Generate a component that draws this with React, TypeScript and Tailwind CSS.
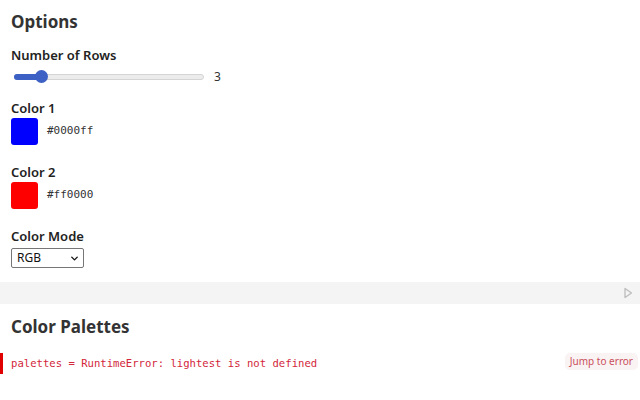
import { ChevronDown } from "lucide-react";

const sans = "font-['Noto_Sans','Open_Sans',sans-serif]";
const mono = "font-['DejaVu_Sans_Mono',monospace]";

const Swatch = ({ color, hex }: { color: string; hex: string }) => (
  <div className="flex items-center h-[27px]">
    <div className="w-[27px] h-[27px] rounded-[3px]" style={{ background: color }} />
    <span className={`${mono} text-[11px] text-[#333] ml-[9px]`}>{hex}</span>
  </div>
);

const App = () => {
  return (
    <div className={`${sans} bg-white w-[640px] h-[400px] overflow-hidden text-[#222]`}>
      <div className="px-[11px]">
        <h2 className="mt-[10px] h-[24px] text-[17px] leading-[24px] font-bold text-[#333]">Options</h2>

        <div className="mt-[12px] h-[18px] text-[13px] leading-[18px] font-semibold">Number of Rows</div>
        <div className="mt-[6px] flex items-center h-[14px]">
          <div className="relative w-[192px] h-[14px] ml-[1px]">
            <div className="absolute left-[2px] right-0 top-[4px] h-[6px] rounded-full bg-[#ececec] border border-[#d4d4d4]" />
            <div className="absolute left-[2px] w-[30px] top-[4px] h-[6px] rounded-full bg-[#3c60c4]" />
            <div className="absolute left-[23px] top-0 w-[13px] h-[13px] rounded-full bg-[#3c60c4]" />
          </div>
          <span className="ml-[10px] text-[12px] text-[#333]">3</span>
        </div>

        <div className="mt-[15px] h-[18px] text-[13px] leading-[18px] font-semibold">Color 1</div>
        <div className="mt-[1px]">
          <Swatch color="#0000ff" hex="#0000ff" />
        </div>

        <div className="mt-[18px] h-[18px] text-[13px] leading-[18px] font-semibold">Color 2</div>
        <div className="mt-[1px]">
          <Swatch color="#ff0000" hex="#ff0000" />
        </div>

        <div className="mt-[18px] h-[18px] text-[13px] leading-[18px] font-semibold">Color Mode</div>
        <div className="mt-[3px] w-[73px] h-[20px] border border-[#767676] rounded-[2px] flex items-center justify-between pl-[5px] pr-[3px]">
          <span className="text-[12px] text-[#111]">RGB</span>
          <ChevronDown className="w-[11px] h-[11px] text-[#111]" strokeWidth={3} />
        </div>
      </div>

      <div className="mt-[14px] h-[22px] bg-[#f4f4f4] flex items-center justify-end pr-[7px]">
        <svg width="10" height="12" viewBox="0 0 10 12" fill="none">
          <path d="M2 1.5 L8.5 6 L2 10.5 Z" stroke="#bdbdbd" strokeWidth="1.3" strokeLinejoin="round" />
        </svg>
      </div>

      <h2 className="mt-[11px] px-[11px] h-[24px] text-[17px] leading-[24px] font-bold text-[#333]">Color Palettes</h2>

      <div className="mt-[14px] flex items-center h-[21px]">
        <div className="w-[3px] h-[21px] bg-[#e00000]" />
        <span className={`${mono} ml-[8px] mt-[1px] text-[10.6px] text-[#d3263b]`}>
          palettes = RuntimeError: lightest is not defined
        </span>
        <span className="ml-auto mr-[2px] mb-[4px] px-[5px] h-[17px] leading-[17px] rounded-[5px] bg-[#faf3f3] text-[10px] text-[#c9505c]">
          Jump to error
        </span>
      </div>
    </div>
  );
};

export default App;
